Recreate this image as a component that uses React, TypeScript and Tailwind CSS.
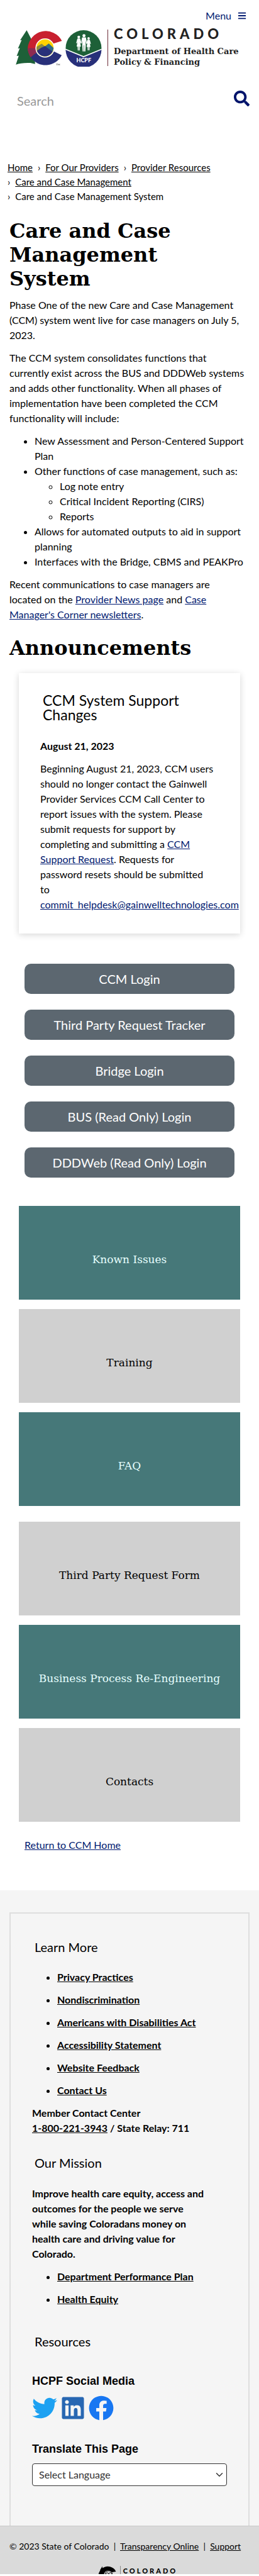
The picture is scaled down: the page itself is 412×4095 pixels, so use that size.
import React from "react";
import { ChevronDown } from "lucide-react";
import { FaBars, FaFacebook, FaLinkedin, FaSearch, FaTwitter } from "react-icons/fa";

const crumbs = ["For Our Providers", "Provider Resources", "Care and Case Management"];
const logins = [
  "CCM Login",
  "Third Party Request Tracker",
  "Bridge Login",
  "BUS (Read Only) Login",
  "DDDWeb (Read Only) Login",
];
const tileGroups = [
  ["Known Issues", "Training", "FAQ"],
  ["Third Party Request Form", "Business Process Re-Engineering", "Contacts"],
];
const learnMore = [
  "Privacy Practices",
  "Nondiscrimination",
  "Americans with Disabilities Act",
  "Accessibility Statement",
  "Website Feedback",
  "Contact Us",
];
const mission = ["Department Performance Plan", "Health Equity"];

function Person({ x, y, s, skirt }: { x: number; y: number; s: number; skirt?: boolean }) {
  return (
    <g transform={`translate(${x} ${y}) scale(${s})`} fill="#fff">
      <circle cx="0" cy="6" r="7" />
      {skirt ? (
        <path d="M-7 14H7L13 36L10 39L6 30L11 54H6L5 74H1V54H-1V74H-5L-6 54H-11L-6 30L-10 39L-13 36Z" />
      ) : (
        <path d="M-9 14H9L13 40L10 42L7 28L8 50L6 78H1V50H-1V78H-6L-8 50L-7 28L-10 42L-13 40Z" />
      )}
    </g>
  );
}

function Emblem() {
  return (
    <svg viewBox="30 45 412 178" className="h-[59px] w-[137px] shrink-0" role="img" aria-label="Colorado HCPF emblem">
      <path
        d="M82 48L50 97L58 95L40 136L49 134L34 172L44 170L30 213Q58 203 100 205L122 210V80L104 90Z"
        fill="#1d6038"
      />
      <path d="M251 99A87 87 0 0 0 87 134Q87 155 101 178L138 148A43 43 0 0 1 208 113Z" fill="#c8202f" />
      <path d="M101 178L138 148L128 134L87 134Q88 158 101 178Z" fill="#8d2a51" />
      <path d="M101 178A87 87 0 0 0 250 168L211 149A43 43 0 0 1 134 151Z" fill="#28307a" />
      <circle cx="170" cy="133" r="46" fill="#fff" />
      <circle cx="170" cy="133" r="41" fill="#ffd200" />
      <path d="M130 127L154 113L170 126L188 112L211 133A41 41 0 0 1 129 133Z" fill="#8a8a3c" />
      <path d="M170 126L188 112L211 133L205 152L135 152L154 130Z" fill="#2f6a86" />
      <path d="M131 147L149 134L170 124L188 138L206 150A41 41 0 0 1 131 147Z" fill="#28307a" />
      <path d="M224 210h7M227.500 210v7M234 217v-7l3 4l3-4v7" stroke="#333" strokeWidth="1.500" fill="none" />
      <circle cx="355" cy="134" r="86" fill="#1d6038" />
      <path d="M269 141L355 177L441 141A86 86 0 0 1 269 141Z" fill="#28307a" />
      <path d="M268 139L355 175L442 139" stroke="#fff" strokeWidth="5" fill="none" />
      <Person x={332} y={75} s={0.95} skirt />
      <Person x={357} y={68} s={1.05} />
      <Person x={379} y={82} s={0.85} skirt />
      <text x="356" y="203" textAnchor="middle" fontFamily="Lato, sans-serif" fontWeight="900" fontSize="27" fill="#fff">
        HCPF
      </text>
    </svg>
  );
}

function StateMark() {
  return (
    <svg viewBox="0 0 62 52" className="h-[26px] w-[31px] shrink-0" role="img" aria-label="State of Colorado">
      <path d="M18 1L10 13L12 13L5 25L8 25L0 42L18 42Z" />
      <path d="M61 18A28 26 0 1 0 61 37L50 33A14 14 0 1 1 48 20Z" />
      <circle cx="38" cy="27" r="11.500" fill="none" stroke="#000" strokeWidth="2" />
      <path d="M28 27L34 21L38 25L43 20L49 27M30 31L38 25L47 31" fill="none" stroke="#000" strokeWidth="2" />
    </svg>
  );
}

function TextLink({ children }: { children: React.ReactNode }) {
  return (
    <a href="#" className="text-[#001970] underline">
      {children}
    </a>
  );
}

function FooterLinks({ items }: { items: string[] }) {
  return (
    <ul className="list-disc space-y-3 pl-10 font-bold">
      {items.map((item) => (
        <li key={item}>
          <a href="#" className="underline">
            {item}
          </a>
        </li>
      ))}
    </ul>
  );
}

export default function App() {
  return (
    <div className="bg-white font-['Lato',sans-serif] text-base leading-6 text-black">
      <header>
        <div className="flex justify-end px-5 pt-[13px]">
          <button type="button" className="flex items-center gap-[10px] text-[#001970]">
            Menu
            <FaBars className="size-[14px]" />
          </button>
        </div>
        <div className="flex items-center pt-2 pl-[25px]">
          <Emblem />
          <div className="ml-[9px] h-[58px] w-px shrink-0 bg-[#6b2a36]" />
          <div className="ml-[9px] whitespace-nowrap text-[#222]">
            <div className="text-[22px] leading-[18px] font-black tracking-[6px]">COLORADO</div>
            <div className="mt-[10px] font-['DejaVu_Serif',serif] text-[13px] leading-[17px] font-bold">
              Department of Health Care
              <br />
              Policy &amp; Financing
            </div>
          </div>
        </div>
        <form className="flex items-start justify-between pt-[37px] pr-[15px] pl-[27px]">
          <input
            type="search"
            aria-label="Search"
            placeholder="Search"
            className="h-8 min-w-0 flex-1 text-xl outline-none placeholder:text-[#999]"
          />
          <button type="submit" aria-label="Submit search" className="text-[#00146b]">
            <FaSearch className="size-[25px]" />
          </button>
        </form>
      </header>

      <nav aria-label="Breadcrumb" className="mt-[79px] px-3 text-[15px] leading-[23px]">
        <ol className="flex flex-wrap">
          <li className="mr-2">
            <a href="#" className="underline">
              Home
            </a>
          </li>
          {crumbs.map((crumb) => (
            <li key={crumb} className="mr-2">
              <span className="mr-2">›</span>
              <a href="#" className="underline">
                {crumb}
              </a>
            </li>
          ))}
          <li className="w-full">
            <span className="mr-2">›</span>
            Care and Case Management System
          </li>
        </ol>
      </nav>

      <main>
        <div className="px-[15px] pt-6">
          <h1 className="font-['DejaVu_Serif',serif] text-[32px] leading-[38px] font-bold">
            Care and Case
            <br />
            Management
            <br />
            System
          </h1>
          <p className="mt-[11px]">
            Phase One of the new Care and Case Management
            <br />
            (CCM) system went live for case managers on July 5,
            <br />
            2023.
          </p>
          <p className="mt-3">
            The CCM system consolidates functions that
            <br />
            currently exist across the BUS and DDDWeb systems
            <br />
            and adds other functionality. When all phases of
            <br />
            implementation have been completed the CCM
            <br />
            functionality will include:
          </p>
          <ul className="mt-3 list-disc pl-10">
            <li>
              New Assessment and Person-Centered Support
              <br />
              Plan
            </li>
            <li>
              Other functions of case management, such as:
              <ul className="list-[circle] pl-10">
                <li>Log note entry</li>
                <li>Critical Incident Reporting (CIRS)</li>
                <li>Reports</li>
              </ul>
            </li>
            <li>
              Allows for automated outputs to aid in support
              <br />
              planning
            </li>
            <li>Interfaces with the Bridge, CBMS and PEAKPro</li>
          </ul>
          <p className="mt-3">
            Recent communications to case managers are
            <br />
            located on the <TextLink>Provider News page</TextLink> and{" "}
            <TextLink>
              Case
              <br />
              Manager's Corner newsletters
            </TextLink>
            .
          </p>
          <h2 className="mt-[22px] font-['DejaVu_Serif',serif] text-[32px] leading-[38px] font-bold">Announcements</h2>
        </div>

        <section className="mx-[30px] mt-[21px] px-[34px] pt-8 pb-[34px] shadow-[0_2px_10px_rgba(0,0,0,0.16)]">
          <h3 className="px-1 text-[23px] leading-[23px]">
            CCM System Support
            <br />
            Changes
          </h3>
          <p className="mt-[26px] font-bold">August 21, 2023</p>
          <p className="mt-3 whitespace-nowrap">
            Beginning August 21, 2023, CCM users
            <br />
            should no longer contact the Gainwell
            <br />
            Provider Services CCM Call Center to
            <br />
            report issues with the system. Please
            <br />
            submit requests for support by
            <br />
            completing and submitting a{" "}
            <TextLink>
              CCM
              <br />
              Support Request
            </TextLink>
            . Requests for
            <br />
            password resets should be submitted
            <br />
            to
            <br />
            <TextLink>commit_helpdesk@gainwelltechnologies.com</TextLink>
          </p>
        </section>

        <div className="mx-[39px] mt-12 flex flex-col gap-[25px]">
          {logins.map((login) => (
            <a
              key={login}
              href="#"
              className="flex h-12 items-center justify-center rounded-[10px] bg-[#5c6770] text-xl text-white"
            >
              {login}
            </a>
          ))}
        </div>

        <div className="mx-[30px] mt-[45px] flex flex-col gap-[25px]">
          {tileGroups.map((group, g) => (
            <div key={group[0]} className="flex flex-col gap-[15px]">
              {group.map((tile, i) => (
                <a
                  key={tile}
                  href="#"
                  className={
                    (g + i) % 2 === 0
                      ? "flex h-[149px] items-center justify-center bg-[#467879] pt-5 font-['DejaVu_Serif',serif] text-[17px] text-[#e6ffff]"
                      : "flex h-[149px] items-center justify-center bg-[#d0d0d0] pt-5 font-['DejaVu_Serif',serif] text-[17px] text-black"
                  }
                >
                  {tile}
                </a>
              ))}
            </div>
          ))}
        </div>

        <p className="mt-[25px] px-[39px]">
          <TextLink>Return to CCM Home</TextLink>
        </p>
      </main>

      <footer className="mt-[60px]">
        <div className="bg-[#f5f5f5] px-[15px] pt-[35px]">
          <div className="border-x-2 border-t-2 border-[#dedede] px-[34px] pt-[39px] pb-[63px]">
            <h2 className="px-1 text-xl leading-7">Learn More</h2>
            <div className="mt-[22px]">
              <FooterLinks items={learnMore} />
            </div>
            <p className="mt-3 font-bold">
              Member Contact Center
              <br />
              <a href="#" className="underline">
                1-800-221-3943
              </a>{" "}
              / State Relay: 711
            </p>
            <h2 className="mt-[29px] px-1 text-xl leading-7">Our Mission</h2>
            <p className="mt-[23px] font-bold whitespace-nowrap">
              Improve health care equity, access and
              <br />
              outcomes for the people we serve
              <br />
              while saving Coloradans money on
              <br />
              health care and driving value for
              <br />
              Colorado.
            </p>
            <div className="mt-3">
              <FooterLinks items={mission} />
            </div>
            <h2 className="mt-[41px] px-1 text-xl leading-7">Resources</h2>
            <h3 className="mt-[37px] font-['Liberation_Sans',sans-serif] text-lg leading-6 font-bold">
              HCPF Social Media
            </h3>
            <div className="mt-[11px] flex gap-[5px]">
              <a href="#" aria-label="Twitter">
                <FaTwitter className="size-10 text-[#1da1f2]" />
              </a>
              <a href="#" aria-label="LinkedIn">
                <FaLinkedin className="size-10 text-[#2867b2]" />
              </a>
              <a href="#" aria-label="Facebook">
                <FaFacebook className="size-10 text-[#1877f2]" />
              </a>
            </div>
            <label
              htmlFor="language"
              className="mt-[33px] block font-['Liberation_Sans',sans-serif] text-lg leading-6 font-bold"
            >
              Translate This Page
            </label>
            <div className="relative mt-[11px]">
              <select
                id="language"
                className="h-9 w-full appearance-none rounded-[4px] border border-[#333] bg-white px-[10px] text-base text-[#333]"
              >
                <option>Select Language</option>
              </select>
              <ChevronDown className="pointer-events-none absolute top-[9px] right-[3px] size-[18px] text-[#333]" />
            </div>
          </div>
        </div>
        <div className="border-t border-[#c8c8c8] bg-[#dadada] pt-5">
          <p className="px-[15px] text-sm leading-6 whitespace-nowrap">
            © 2023 State of Colorado &nbsp;|&nbsp;{" "}
            <a href="#" className="underline">
              Transparency Online
            </a>{" "}
            &nbsp;|&nbsp;{" "}
            <a href="#" className="underline">
              Support
            </a>
          </p>
          <div className="mt-[19px] flex h-[13px] items-start justify-center overflow-hidden pl-6">
            <StateMark />
            <div className="mr-1 ml-[6px] h-6 w-px bg-[#888]" />
            <span className="pt-[3px] text-[11px] leading-[10px] font-black tracking-[3px]">COLORADO</span>
          </div>
        </div>
      </footer>
    </div>
  );
}
